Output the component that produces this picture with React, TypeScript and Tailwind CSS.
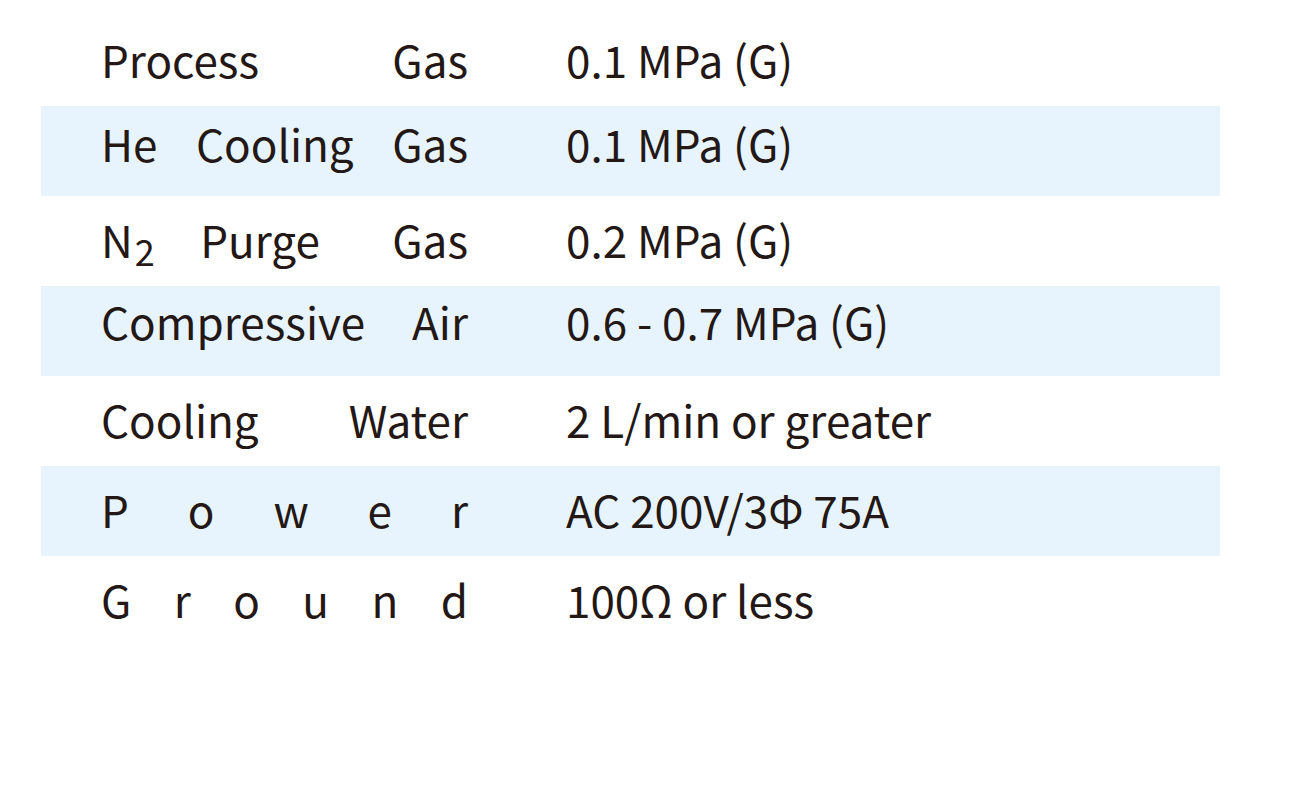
const font = { fontFamily: '"Noto Sans CJK JP", "Noto Sans", sans-serif' };

type Row = { label: React.ReactNode[]; value: string; shaded?: boolean; pad: string };

const rows: Row[] = [
  { label: ["Process", "Gas"], value: "0.1 MPa (G)", pad: "pt-[21px]" },
  { label: ["He", "Cooling", "Gas"], value: "0.1 MPa (G)", shaded: true, pad: "pt-[15px]" },
  {
    label: [
      <span key="n2" className="flex items-baseline">
        N<span className="ml-[2px] translate-y-[8px] text-[36px] leading-none">2</span>
      </span>,
      <span key="purge" className="mr-[27px]">Purge</span>,
      "Gas",
    ],
    value: "0.2 MPa (G)",
    pad: "pt-[21px]",
  },
  { label: ["Compressive", "Air"], value: "0.6 - 0.7 MPa (G)", shaded: true, pad: "pt-[13px]" },
  { label: ["Cooling", "Water"], value: "2 L/min or greater", pad: "pt-[21px]" },
  { label: ["P", "o", "w", "e", "r"], value: "AC 200V/3Φ 75A", shaded: true, pad: "pt-[21px]" },
  { label: ["G", "r", "o", "u", "n", "d"], value: "100Ω or less", pad: "pt-[21px]" },
];

export default function App() {
  return (
    <div className="min-h-[806px] w-[1316px] bg-white pt-[16px] text-[#231815]" style={font}>
      <div className="ml-[41px] w-[1179px]">
        {rows.map((r, i) => (
          <div
            key={i}
            className={`flex h-[90px] items-baseline leading-none ${r.pad} ${r.shaded ? "bg-[#e7f4fd]" : ""}`}
          >
            <div className="ml-[60px] flex w-[367px] items-baseline justify-between text-[44px]">
              {r.label.map((w, j) => (
                <span key={j}>{w}</span>
              ))}
            </div>
            <div className="ml-[98px] text-[44px]">{r.value}</div>
          </div>
        ))}
      </div>
    </div>
  );
}
